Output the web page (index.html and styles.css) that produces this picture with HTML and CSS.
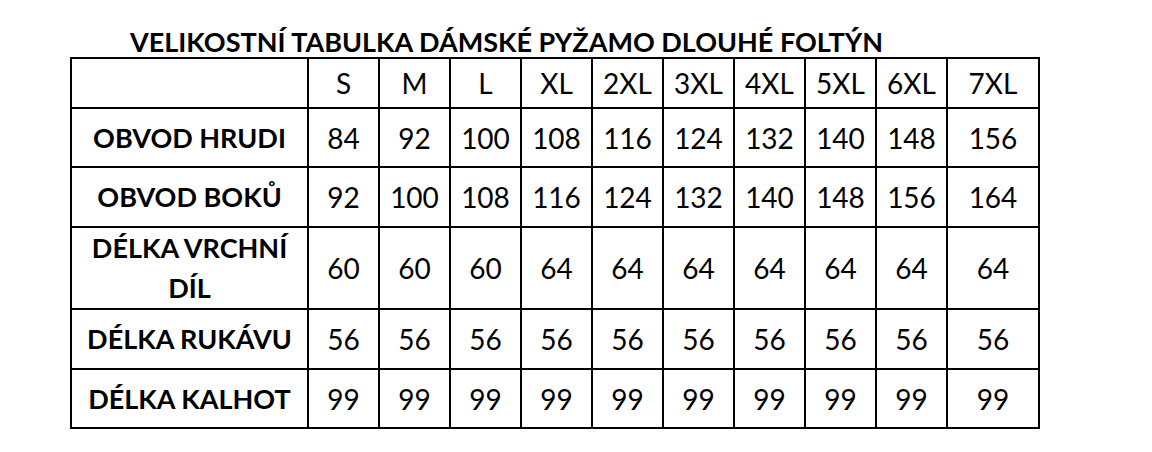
FILE: index.html
```html
<!DOCTYPE html>
<html lang="cs">
<head>
<meta charset="utf-8">
<title>Velikostní tabulka</title>
<link rel="stylesheet" href="styles.css">
</head>
<body>
<h1 class="title">VELIKOSTNÍ TABULKA DÁMSKÉ PYŽAMO DLOUHÉ FOLTÝN</h1>
<table class="sizes">
  <colgroup>
    <col class="c-label">
    <col class="c-size"><col class="c-size"><col class="c-size"><col class="c-size"><col class="c-size">
    <col class="c-size"><col class="c-size"><col class="c-size"><col class="c-size">
    <col class="c-last">
  </colgroup>
  <tr class="r-head">
    <td></td><td>S</td><td>M</td><td>L</td><td>XL</td><td>2XL</td><td>3XL</td><td>4XL</td><td>5XL</td><td>6XL</td><td>7XL</td>
  </tr>
  <tr class="r-1">
    <th>OBVOD HRUDI</th><td>84</td><td>92</td><td>100</td><td>108</td><td>116</td><td>124</td><td>132</td><td>140</td><td>148</td><td>156</td>
  </tr>
  <tr class="r-2">
    <th>OBVOD BOKŮ</th><td>92</td><td>100</td><td>108</td><td>116</td><td>124</td><td>132</td><td>140</td><td>148</td><td>156</td><td>164</td>
  </tr>
  <tr class="r-3">
    <th class="two-line">DÉLKA VRCHNÍ DÍL</th><td>60</td><td>60</td><td>60</td><td>64</td><td>64</td><td>64</td><td>64</td><td>64</td><td>64</td><td>64</td>
  </tr>
  <tr class="r-4">
    <th>DÉLKA RUKÁVU</th><td>56</td><td>56</td><td>56</td><td>56</td><td>56</td><td>56</td><td>56</td><td>56</td><td>56</td><td>56</td>
  </tr>
  <tr class="r-5">
    <th>DÉLKA KALHOT</th><td>99</td><td>99</td><td>99</td><td>99</td><td>99</td><td>99</td><td>99</td><td>99</td><td>99</td><td>99</td>
  </tr>
</table>
</body>
</html>
```

FILE: styles.css
```css
html, body {
  margin: 0;
  padding: 0;
  background: #ffffff;
}
body {
  font-family: Lato, "Open Sans", "Liberation Sans", sans-serif;
  color: #000;
}
.title {
  margin: 0;
  padding: 26px 0 0 130px;
  height: 31px;
  font-size: 27px;
  line-height: 31px;
  font-weight: 700;
  letter-spacing: 0;
  white-space: nowrap;
}
.sizes {
  margin-left: 70px;
  border-collapse: collapse;
  table-layout: fixed;
  width: 970px;
}
.c-label { width: 237px; }
.c-size { width: 71px; }
.c-last { width: 92px; }
.sizes td, .sizes th {
  border: 2px solid #000;
  padding: 0;
  text-align: center;
  vertical-align: middle;
  font-size: 28px;
  font-weight: 400;
  line-height: 30px;
}
.sizes th {
  font-size: 27px;
  font-weight: 700;
  padding: 0 6px;
}
.sizes .two-line { line-height: 40px; }
.r-head { height: 50px; }
.r-1 { height: 59px; }
.r-2 { height: 60px; }
.r-3 { height: 81px; }
.r-4 { height: 60px; }
.r-5 { height: 59px; }
```
